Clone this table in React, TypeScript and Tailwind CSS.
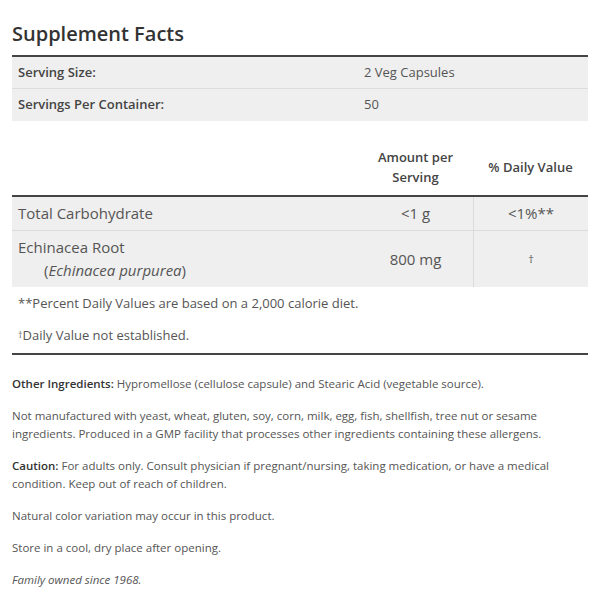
import React from 'react';

const nutrients = [
  { name: 'Total Carbohydrate', sub: null, amount: '<1 g', dv: '<1%**' },
  { name: 'Echinacea Root', sub: 'Echinacea purpurea', amount: '800 mg', dv: '†' },
];

export default function App() {
  return (
    <div
      className="w-[600px] h-[600px] bg-white px-3 text-[#555]"
      style={{ fontFamily: '"Open Sans", "Liberation Sans", sans-serif' }}
    >
      <h2 className="pt-[20px] pb-[7px] text-[20px] leading-[28px] font-semibold text-[#333]">
        Supplement Facts
      </h2>

      {/* Serving info */}
      <div className="border-t-2 border-[#444]">
        <div className="grid grid-cols-[346px_1fr] bg-[#efefef] border-b border-[#dcdcdc] h-8 items-center text-[13px]">
          <span className="px-1.5 font-semibold text-[#444]">Serving Size:</span>
          <span className="px-1.5">2 Veg Capsules</span>
        </div>
        <div className="grid grid-cols-[346px_1fr] bg-[#efefef] h-8 items-center text-[13px]">
          <span className="px-1.5 font-semibold text-[#444]">Servings Per Container:</span>
          <span className="px-1.5">50</span>
        </div>
      </div>

      {/* Nutrients */}
      <div className="grid grid-cols-[346px_115px_115px] pt-[26px] pb-[8px] items-center text-[13px] font-semibold text-[#444]">
        <span />
        <span className="text-center leading-5">
          Amount per
          <br />
          Serving
        </span>
        <span className="text-center leading-5">% Daily Value</span>
      </div>
      <div className="border-t-2 border-[#444]">
        {nutrients.map((n, i) => (
          <div
            key={n.name}
            className={
              'grid grid-cols-[346px_115px_115px] bg-[#efefef] text-[15px] ' +
              (i < nutrients.length - 1 ? 'border-b border-[#dcdcdc]' : '')
            }
          >
            <div className="px-1.5 py-[6px] leading-[21px]">
              <div>{n.name}</div>
              {n.sub && (
                <div className="pl-[26px] pt-[2px]">
                  (<i>{n.sub}</i>)
                </div>
              )}
            </div>
            <div className="flex items-center justify-center">{n.amount}</div>
            <div
              className={
                'flex items-center justify-center border-l border-[#dcdcdc] ' +
                (n.dv === '†' ? 'text-[11px]' : 'text-[15px]')
              }
            >
              {n.dv}
            </div>
          </div>
        ))}
      </div>

      <div className="text-[13px] px-1.5 border-b-2 border-[#444] pb-[8px]">
        <p className="pt-[6px] leading-[20px]">**Percent Daily Values are based on a 2,000 calorie diet.</p>
        <p className="pt-[12px] leading-[20px]">
          <span className="text-[9px] align-top">†</span>Daily Value not established.
        </p>
      </div>

      {/* Other info */}
      <div className="max-w-[552px] pt-[20px] text-[11.5px] leading-[18px] text-[#555] flex flex-col gap-[14px]">
        <p>
          <span className="font-semibold text-[#333]">Other Ingredients:</span> Hypromellose (cellulose capsule) and
          Stearic Acid (vegetable source).
        </p>
        <p>
          Not manufactured with yeast, wheat, gluten, soy, corn, milk, egg, fish, shellfish, tree nut or sesame
          ingredients. Produced in a GMP facility that processes other ingredients containing these allergens.
        </p>
        <p>
          <span className="font-semibold text-[#333]">Caution:</span> For adults only. Consult physician if
          pregnant/nursing, taking medication, or have a medical condition. Keep out of reach of children.
        </p>
        <p>Natural color variation may occur in this product.</p>
        <p>Store in a cool, dry place after opening.</p>
        <p className="italic">Family owned since 1968.</p>
      </div>
    </div>
  );
}
